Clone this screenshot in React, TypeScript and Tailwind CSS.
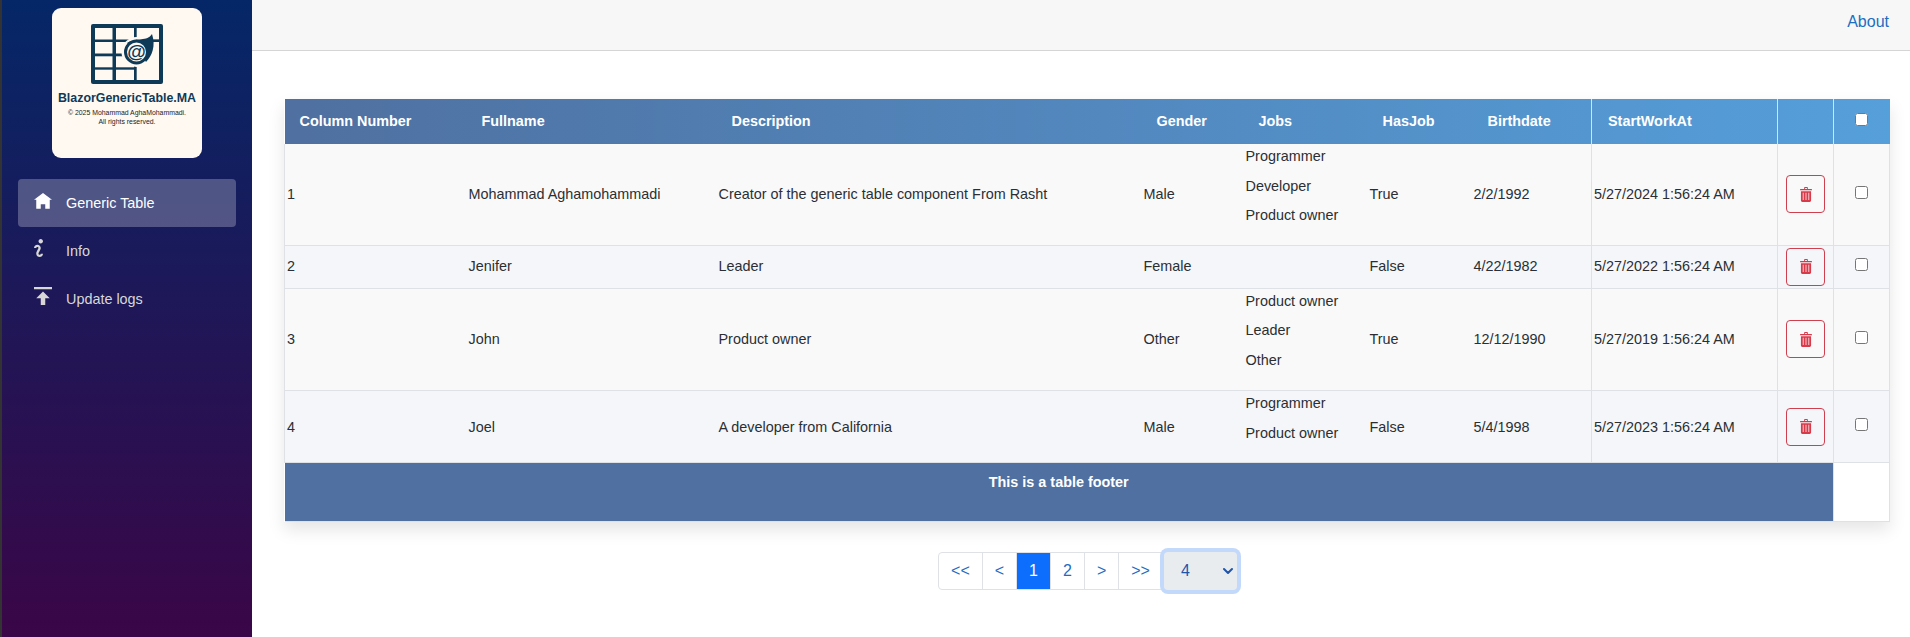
import React from "react";

const rows = [
  { n: "1", name: "Mohammad Aghamohammadi", desc: "Creator of the generic table component From Rasht", gender: "Male", jobs: ["Programmer", "Developer", "Product owner"], has: "True", birth: "2/2/1992", start: "5/27/2024 1:56:24 AM" },
  { n: "2", name: "Jenifer", desc: "Leader", gender: "Female", jobs: [], has: "False", birth: "4/22/1982", start: "5/27/2022 1:56:24 AM" },
  { n: "3", name: "John", desc: "Product owner", gender: "Other", jobs: ["Product owner", "Leader", "Other"], has: "True", birth: "12/12/1990", start: "5/27/2019 1:56:24 AM" },
  { n: "4", name: "Joel", desc: "A developer from California", gender: "Male", jobs: ["Programmer", "Product owner"], has: "False", birth: "5/4/1998", start: "5/27/2023 1:56:24 AM" },
];

const widths = [182, 250, 425, 102, 124, 104, 120, 186, 56, 56];
const heads = ["Column Number", "Fullname", "Description", "Gender", "Jobs", "HasJob", "Birthdate", "StartWorkAt"];

function Logo() {
  const d = "#0f3a57";
  const c = "#fff9f2";
  return (
    <svg width="72" height="60" viewBox="0 0 72 60" className="block">
      <rect width="72" height="60" rx="2" fill={d} />
      {[[4, 4, 17.5, 11.5], [25, 4, 18, 11.5], [45.7, 4, 22.3, 11.5], [4, 18, 17.5, 11.5], [25, 18, 18, 11.5], [4, 32.3, 17.5, 11], [25, 32.3, 18, 11], [4, 45.7, 17.5, 10.3], [25, 45.7, 18, 10.3], [45.7, 18, 22.3, 38]].map((r, i) => (
        <rect key={i} x={r[0]} y={r[1]} width={r[2]} height={r[3]} fill={c} />
      ))}
      <path d="M45.700 15.700H68V18H45.700Z" fill={d} />
      <circle cx="45.5" cy="28" r="15" fill={c} />
      <path d="M36 19 C46 13 56 18 61 10 C65 22 61 32 55 38 L50 30 Z" fill={d} />
      <circle cx="45.5" cy="28" r="11" fill={c} stroke={d} strokeWidth="3" />
      <text x="45.5" y="34" textAnchor="middle" fontSize="19" fontWeight="700" fill={d} fontFamily="'Liberation Sans', sans-serif">@</text>
    </svg>
  );
}

function Trash() {
  return (
    <svg width="12" height="15" viewBox="0 0 13 16" className="block">
      <path d="M4.500 2V.8C4.500.4 4.800 0 5.200 0h2.600c.4 0 .7.4.7.8V2H12.400c.3 0 .6.3.6.6v.9H0v-.9C0 2.300.3 2 .6 2H4.500ZM5.500 2h2V1h-2v1Z" fill="#d93a4a" fillRule="evenodd" />
      <path d="M1 4.500h11V14.500c0 .8-.7 1.500-1.500 1.500h-8C1.700 16 1 15.300 1 14.500V4.500Z" fill="#d93a4a" />
      <path d="M3.500 6v8M6.500 6v8M9.500 6v8" stroke="#f7c9ce" strokeWidth="1.100" />
    </svg>
  );
}

function PageBtn({ children, active, first }: { children: React.ReactNode; active?: boolean; first?: boolean }) {
  return (
    <a className={`flex h-[38px] items-center justify-center px-3 text-base border border-[#dee2e6] ${first ? "rounded-l-[4px]" : "-ml-px"} ${active ? "bg-[#0d6efd] border-[#0d6efd] text-white" : "bg-white text-[#1f6cc4]"}`}>
      {children}
    </a>
  );
}

export default function App() {
  return (
    <div className="flex min-h-[637px] bg-white font-['Liberation_Sans',Arial,sans-serif] text-[14.4px] text-[#2b2f33]">
      <aside className="w-[252px] shrink-0 border-l-2 border-[#333333] bg-[linear-gradient(180deg,#052767_0%,#3a0647_100%)]">
        <div className="ml-[50px] mt-2 flex h-[150px] w-[150px] flex-col items-center rounded-[9px] bg-[#fff9f2] pt-4 text-[#0f3a57]">
          <Logo />
          <div className="mt-[6px] text-[12.4px] font-bold leading-[16px] whitespace-nowrap">BlazorGenericTable.MA</div>
          <div className="mt-[2px] text-center text-[6.9px] leading-[9px] text-[#222222]">
            © 2025 Mohammad AghaMohammadi.
            <br />
            All rights reserved.
          </div>
        </div>
        <nav className="ml-4 mt-[21px] w-[218px] text-[#d7d7d7]">
          <a className="flex h-12 items-center gap-[14px] rounded-[4px] bg-white/25 pl-4 pt-[2px] text-white">
            <svg width="18" height="18" viewBox="0 0 8 8" fill="white" className="-mt-[4px]"><path d="M4 0l-4 3h1v4h2v-2h2v2h2v-4.030l1 .030-4-3z" /></svg>
            Generic Table
          </a>
          <a className="flex h-12 items-center gap-[14px] pl-4 pt-[2px]">
            <svg width="18" height="18" viewBox="0 0 8 8" fill="#d7d7d7" className="-mt-[8px]"><path d="M3 0c-.55 0-1 .45-1 1s.45 1 1 1 1-.45 1-1-.45-1-1-1zm-1.500 2.500c-.83 0-1.500.67-1.500 1.500h1c0-.28.22-.5.5-.5s.5.22.5.5-1 1.640-1 2.500c0 .86.67 1.500 1.500 1.500s1.500-.67 1.500-1.500h-1c0 .28-.22.5-.5.5s-.5-.22-.5-.5c0-.36 1-1.840 1-2.500 0-.81-.67-1.500-1.500-1.500z" /></svg>
            Info
          </a>
          <a className="flex h-12 items-center gap-[14px] pl-4 pt-[2px]">
            <svg width="18" height="18" viewBox="0 0 8 8" fill="#d7d7d7" className="-mt-[8px]"><path d="M0 0v1h8v-1h-8zm4 2l-3 3h2v3h2v-3h2l-3-3z" /></svg>
            Update logs
          </a>
        </nav>
      </aside>
      <main className="flex-1">
        <header className="flex h-[51px] items-center justify-end border-b border-[#d6d5d5] bg-[#f7f7f7] pr-[22px] pb-[6px]">
          <a className="text-base text-[#1b6ec2]">About</a>
        </header>
        <div className="ml-[32px] mr-[21px] mt-12">
          <table className="w-[1605px] table-fixed border-collapse shadow-[0_8px_16px_rgba(0,0,0,0.1)]">
            <colgroup>
              {widths.map((w, i) => (
                <col key={i} style={{ width: w }} />
              ))}
            </colgroup>
            <thead>
              <tr className="h-[45px] bg-[linear-gradient(90deg,#4f70a0,#559fdb)] text-white">
                {heads.map((h, i) => (
                  <th key={h} className={`text-left font-bold ${i >= 6 || i === 0 ? "px-4" : "px-[15px]"} ${i === 0 ? "pl-[15px]" : ""} ${i === 7 ? "border-l border-[#dee2e6]" : ""}`}>
                    {h}
                  </th>
                ))}
                <th className="border-l border-[#dee2e6]" />
                <th className="border-l border-[#dee2e6] text-center align-middle">
                  <input type="checkbox" className="align-middle -mt-[4px]" />
                </th>
              </tr>
            </thead>
            <tbody>
              {rows.map((r, i) => {
                const c = `px-0.5 ${i === 1 ? "" : "pt-[2px]"}`;
                return (
                  <tr key={r.n} className={`border-b border-[#dee2e6] ${i % 2 ? "bg-[#f4f6f9]" : "bg-[#f9f9fa]"}`}>
                    <td className={`border-l border-[#dee2e6] ${c}`}>{r.n}</td>
                    <td className={c}>{r.name}</td>
                    <td className={c}>{r.desc}</td>
                    <td className={c}>{r.gender}</td>
                    <td className={`px-0.5 pt-0.5 align-top ${i === 2 ? "pb-[11px]" : "pb-[10px]"}`}>
                      {r.jobs.map((j) => (
                        <div key={j} className="h-[29.5px] leading-[21px]">{j}</div>
                      ))}
                    </td>
                    <td className={c}>{r.has}</td>
                    <td className={c}>{r.birth}</td>
                    <td className={`border-l border-[#dee2e6] ${c}`}>{r.start}</td>
                    <td className="border-l border-[#dee2e6] px-[8px] py-[2px]">
                      <button className="flex h-[38px] w-[39px] items-center justify-center rounded-[4px] border border-[#cf3f4e]"><Trash /></button>
                    </td>
                    <td className="border-x border-[#dee2e6] text-center">
                      <input type="checkbox" className="align-middle -mt-[4px]" />
                    </td>
                  </tr>
                );
              })}
            </tbody>
            <tfoot>
              <tr className="h-[59px] border-b border-[#dee2e6]">
                <td colSpan={9} className="bg-[#4f70a0] pt-[9px] text-center align-top font-bold text-white">
                  This is a table footer
                </td>
                <td className="border-x border-[#dee2e6] bg-white" />
              </tr>
            </tfoot>
          </table>
          <div className="mt-[30px] flex justify-center">
            <div className="flex pl-[1px]">
              <PageBtn first>{"<<"}</PageBtn>
              <PageBtn>{"<"}</PageBtn>
              <PageBtn active>1</PageBtn>
              <PageBtn>2</PageBtn>
              <PageBtn>{">"}</PageBtn>
              <PageBtn>{">>"}</PageBtn>
              <div className="relative ml-[1px] h-[38px] w-[73px]">
                <select defaultValue="4" className="h-full w-full appearance-none rounded-[4px] bg-[#e9ecef] pl-[17px] text-base text-[#1f55aa] outline-none ring-4 ring-[#c3d9fb]">
                  <option>4</option>
                  <option>8</option>
                </select>
                <svg width="10" height="8" viewBox="0 0 10 8" className="absolute right-[4px] top-[15px]">
                  <path d="M1 2l4 4 4-4" fill="none" stroke="#1f55aa" strokeWidth="2" strokeLinecap="round" strokeLinejoin="round" />
                </svg>
              </div>
            </div>
          </div>
        </div>
      </main>
    </div>
  );
}
